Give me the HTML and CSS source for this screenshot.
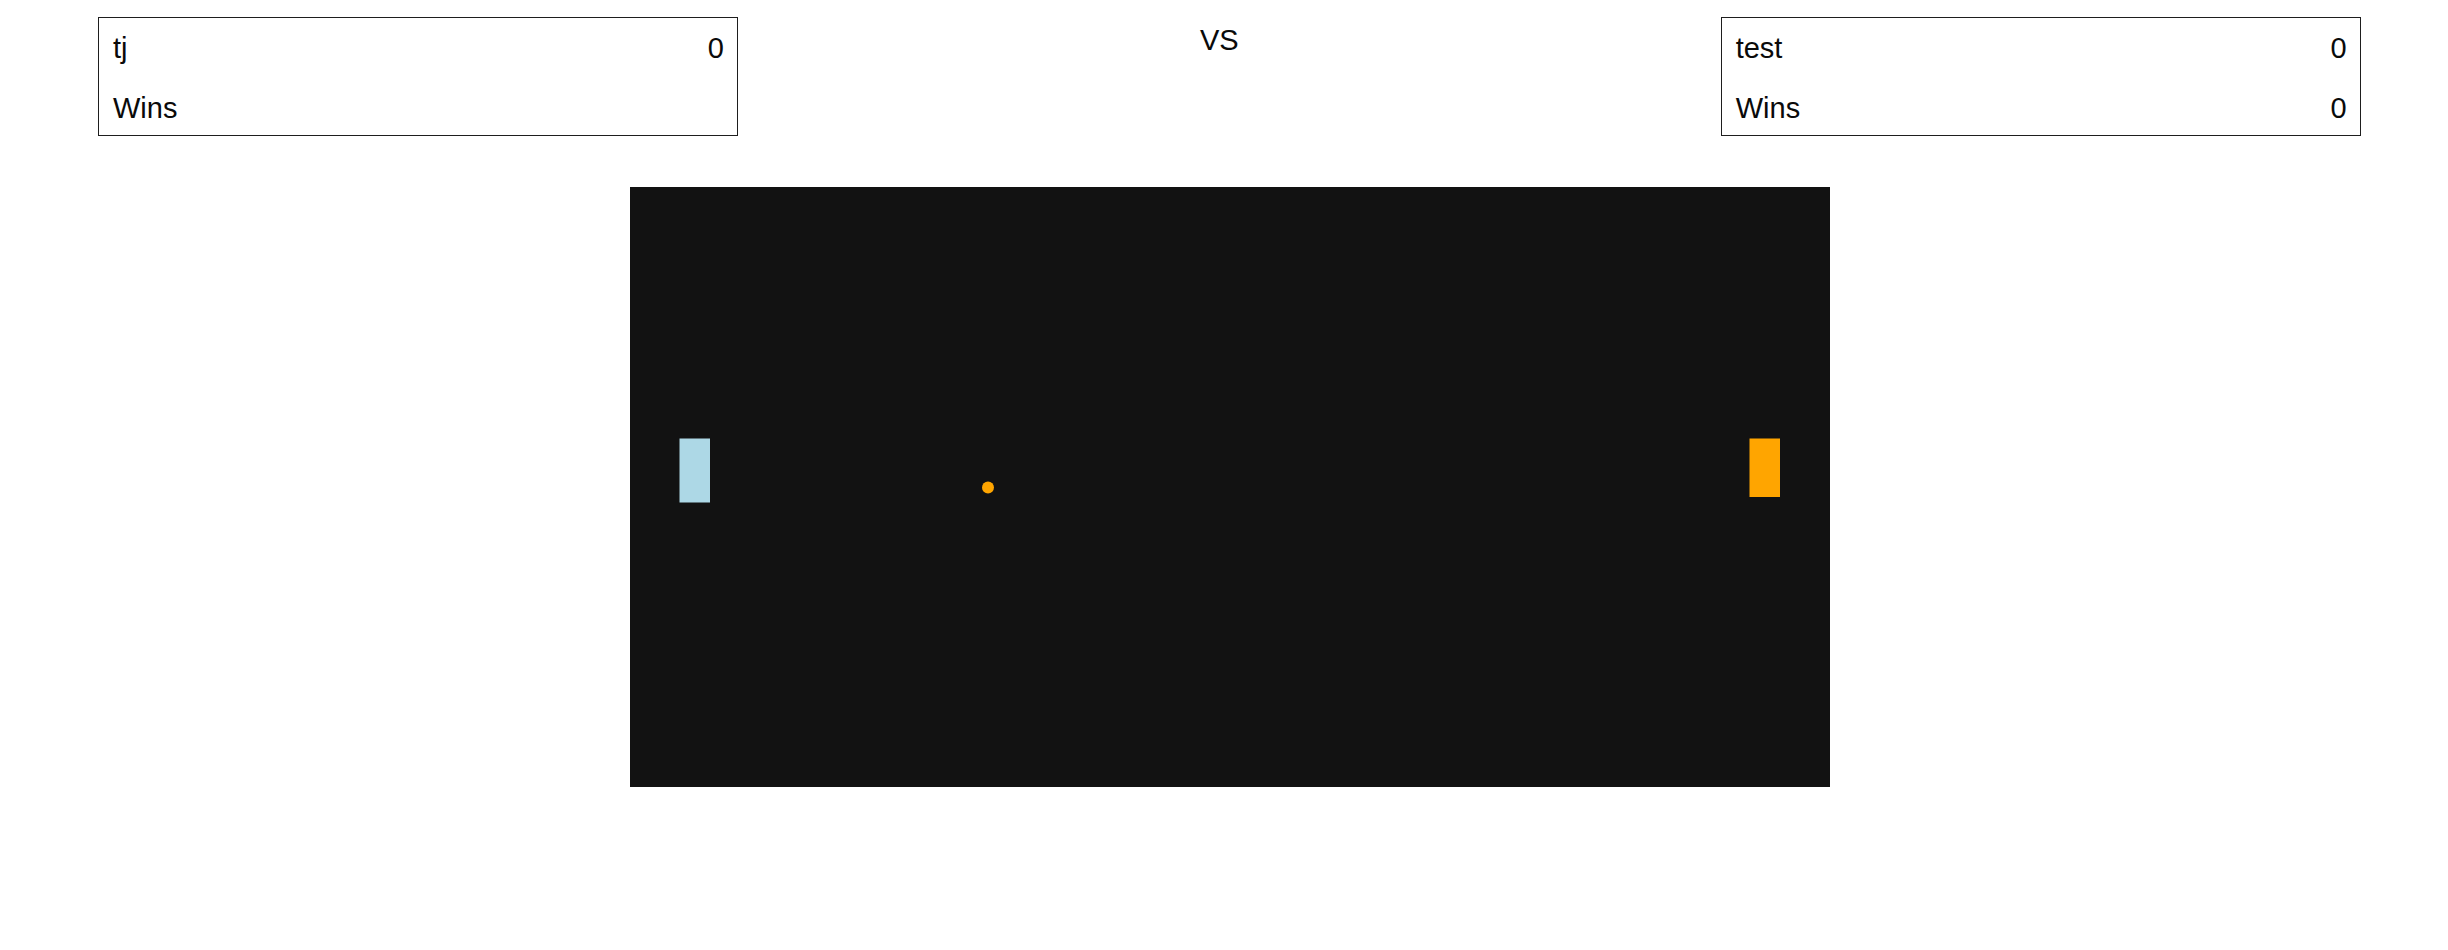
FILE: index.html
```html
<!DOCTYPE html>
<html>
<head>
<meta charset="utf-8">
<title>Pong</title>
<link rel="stylesheet" href="styles.css">
</head>
<body>
<div class="header">
  <div class="player player-left">
    <div class="row"><span>tj</span><span>0</span></div>
    <div class="row"><span>Wins</span><span></span></div>
  </div>
  <div class="vs">VS</div>
  <div class="player player-right">
    <div class="row"><span>test</span><span>0</span></div>
    <div class="row"><span>Wins</span><span>0</span></div>
  </div>
</div>
<div class="board">
  <svg class="field" width="1200" height="600" viewBox="0 0 1200 600">
    <rect x="0" y="0" width="1200" height="600" fill="#121212"/>
    <rect x="49.5" y="251.5" width="30.5" height="64" fill="#add8e6"/>
    <rect x="1119.5" y="251.5" width="30.5" height="58.5" fill="#ffa500"/>
    <circle cx="358" cy="300.5" r="6" fill="#ffa500"/>
  </svg>
</div>
</body>
</html>
```
FILE: styles.css
```css
html, body {
  margin: 0;
  padding: 0;
  background: #ffffff;
}
body {
  font-family: "Liberation Sans", Arial, sans-serif;
  font-size: 29px;
  color: #0a0a0a;
}
.header {
  display: flex;
  align-items: flex-start;
  padding: 17px 0 0 98px;
}
.player {
  box-sizing: border-box;
  width: 640px;
  height: 119px;
  border: 1px solid #1e1e1e;
  padding: 14px 13px 10px 14px;
  display: flex;
  flex-direction: column;
  gap: 27px;
}
.row {
  display: flex;
  justify-content: space-between;
  line-height: 33px;
  height: 33px;
}
.vs {
  margin-left: 462px;
  margin-top: 7px;
  line-height: 33px;
}
.player-right {
  margin-left: 482px;
}
.board {
  margin: 51px 0 0 630px;
  width: 1200px;
  height: 600px;
}
.field {
  display: block;
}
```
